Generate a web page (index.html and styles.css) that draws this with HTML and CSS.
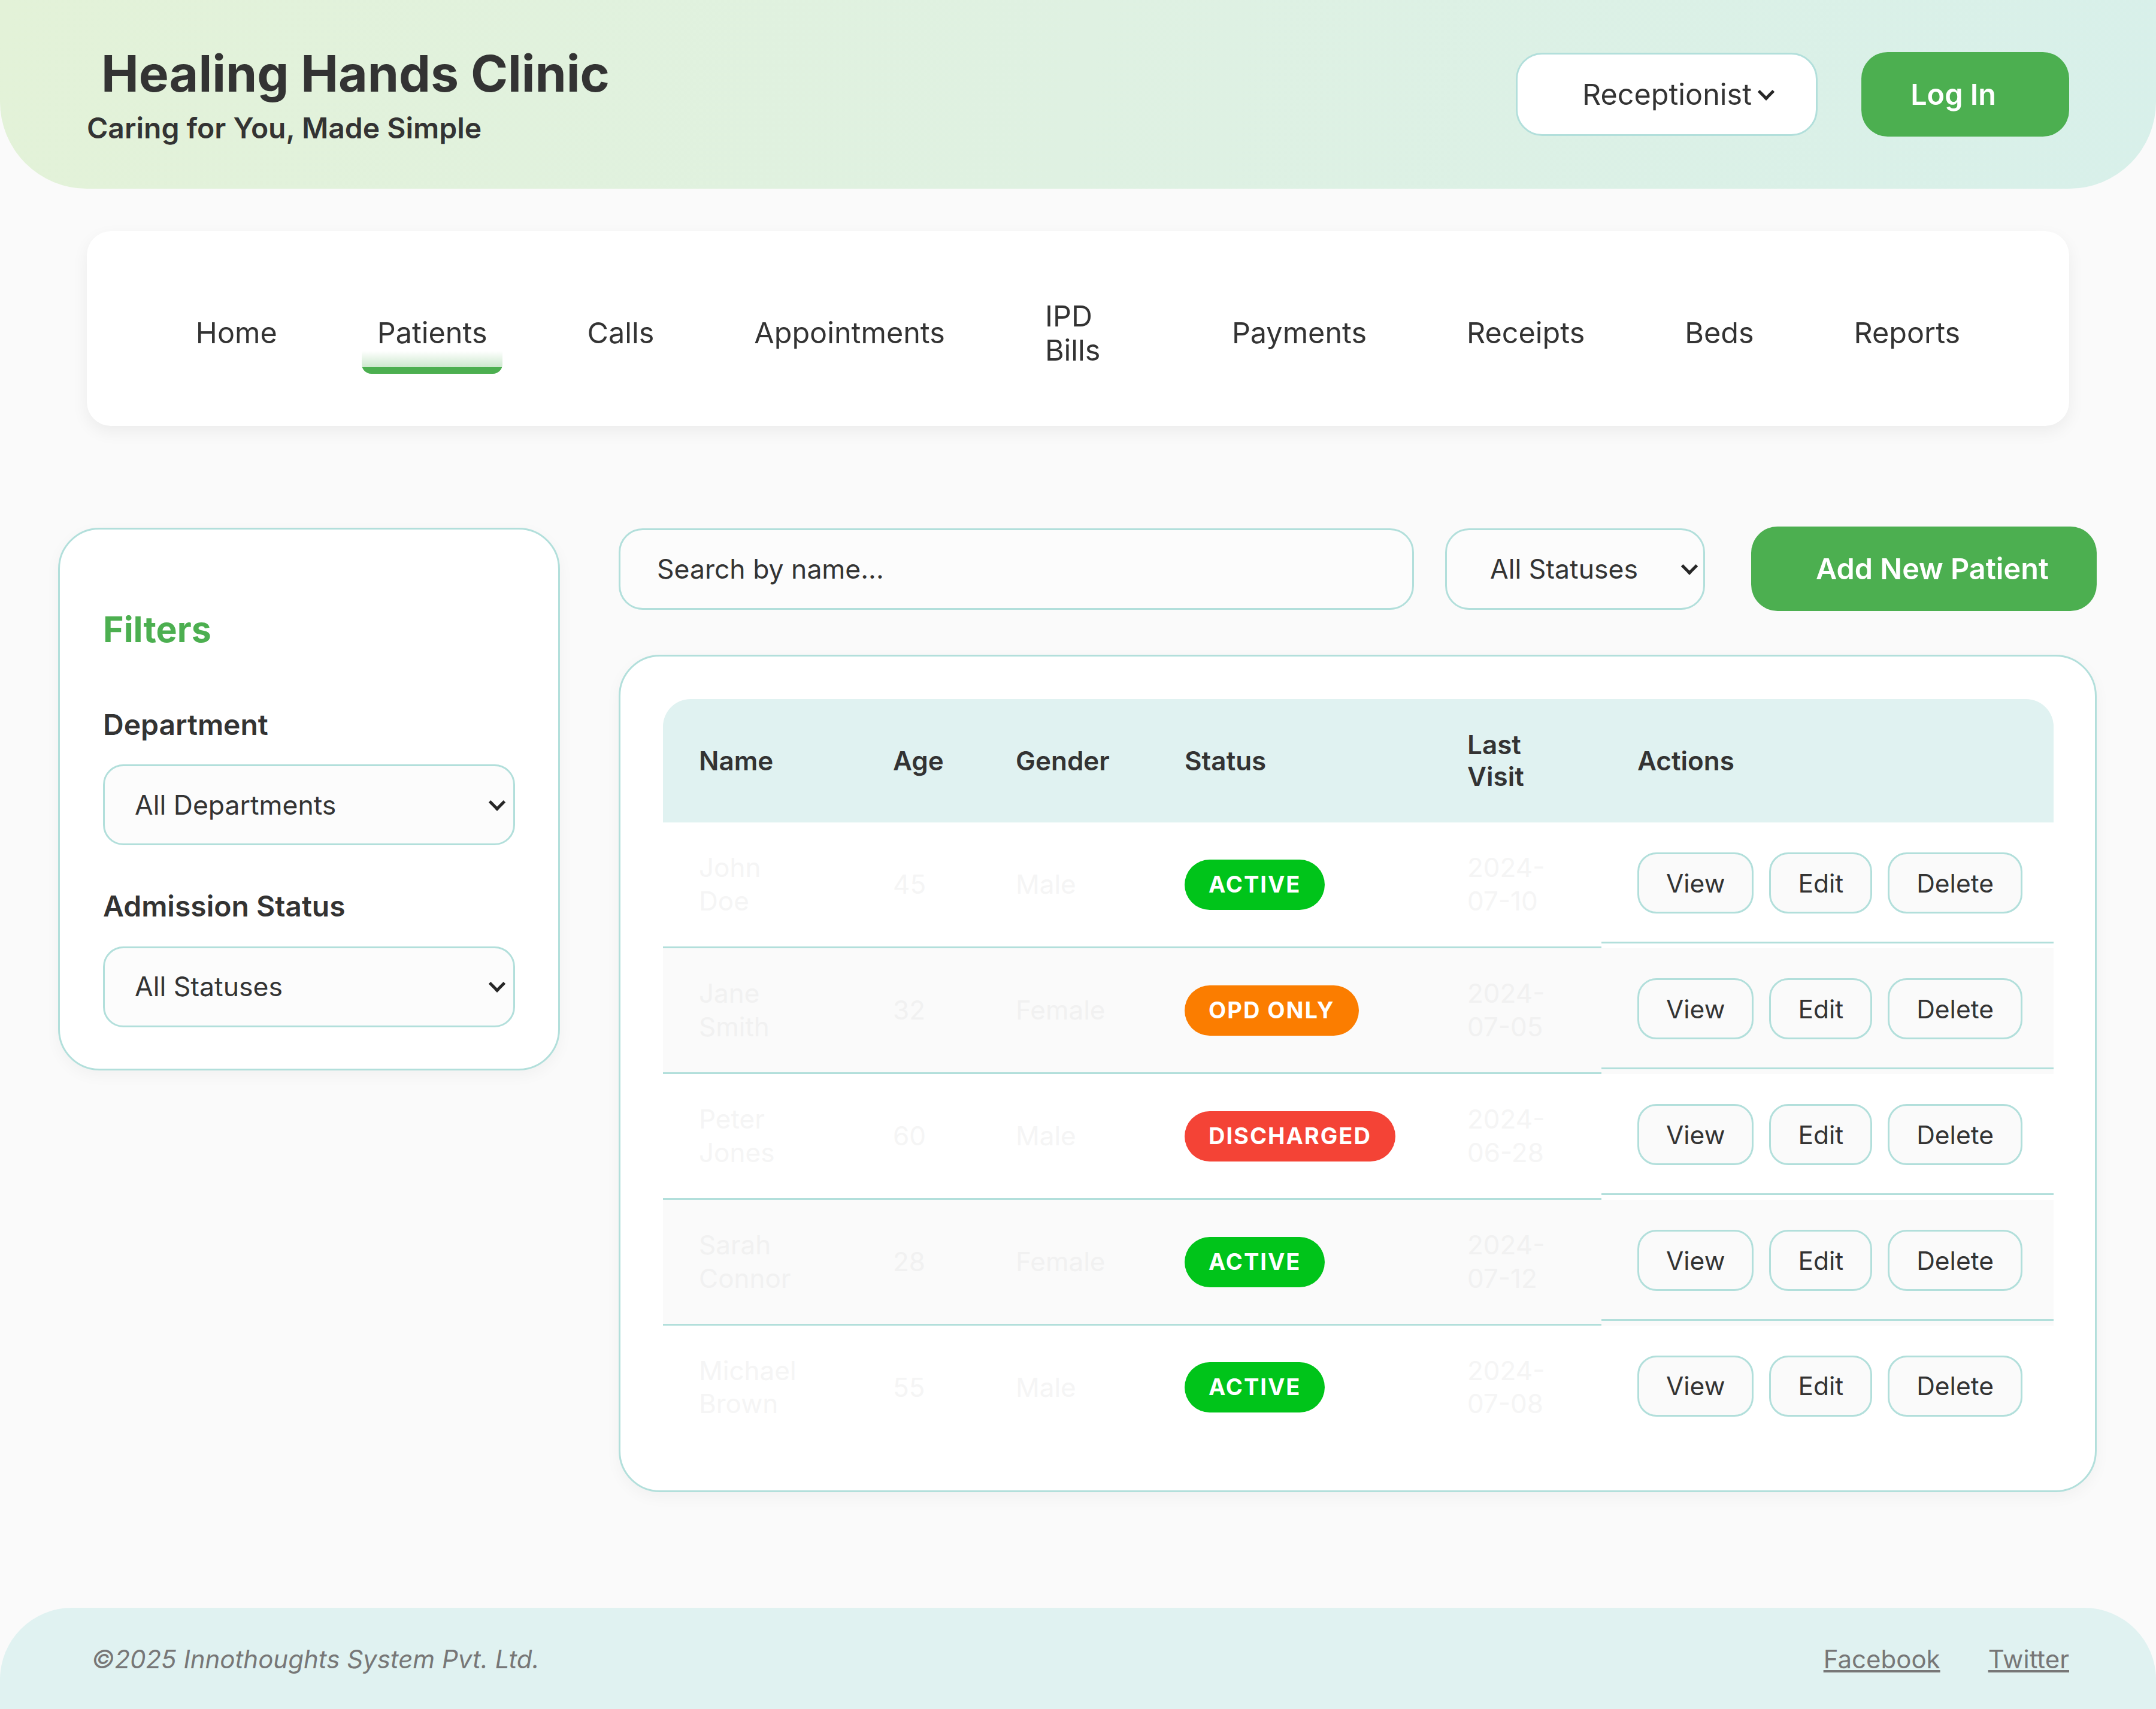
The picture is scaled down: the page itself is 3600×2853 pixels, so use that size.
FILE: index.html
```html
<!DOCTYPE html>
<html lang="en">
<head>
<meta charset="utf-8">
<title>Healing Hands Clinic - Patients</title>
<link rel="stylesheet" href="styles.css">
</head>
<body>
<header class="site-header">
  <div class="brand">
    <h1 class="brand-title">Healing Hands Clinic</h1>
    <p class="brand-tagline">Caring for You, Made Simple</p>
  </div>
  <div class="header-actions">
    <div class="select-wrap role-wrap">
      <select class="role-select">
        <option>Receptionist</option>
        <option>Doctor</option>
        <option>Admin</option>
      </select>
    </div>
    <button class="btn-primary login-btn">Log In</button>
  </div>
</header>

<nav class="main-nav">
  <a class="nav-link" href="#">Home</a>
  <a class="nav-link active" href="#">Patients</a>
  <a class="nav-link" href="#">Calls</a>
  <a class="nav-link" href="#">Appointments</a>
  <a class="nav-link narrow" href="#">IPD Bills</a>
  <a class="nav-link" href="#">Payments</a>
  <a class="nav-link" href="#">Receipts</a>
  <a class="nav-link" href="#">Beds</a>
  <a class="nav-link" href="#">Reports</a>
</nav>

<main class="page">
  <aside class="filters-card">
    <h2 class="filters-title">Filters</h2>
    <div class="filter-group">
      <label class="filter-label">Department</label>
      <div class="select-wrap filter-wrap">
        <select class="filter-select">
          <option>All Departments</option>
        </select>
      </div>
    </div>
    <div class="filter-group">
      <label class="filter-label">Admission Status</label>
      <div class="select-wrap filter-wrap">
        <select class="filter-select">
          <option>All Statuses</option>
        </select>
      </div>
    </div>
  </aside>

  <section class="content">
    <div class="toolbar">
      <input class="search-input" type="text" placeholder="Search by name...">
      <div class="select-wrap status-wrap">
        <select class="status-select">
          <option>All Statuses</option>
        </select>
      </div>
      <button class="btn-primary add-btn">Add New Patient</button>
    </div>

    <div class="table-card">
      <table class="patients-table">
        <colgroup>
          <col class="c-name"><col class="c-age"><col class="c-gender"><col class="c-status"><col class="c-visit"><col class="c-actions">
        </colgroup>
        <thead>
          <tr>
            <th>Name</th><th>Age</th><th>Gender</th><th>Status</th><th>Last Visit</th><th>Actions</th>
          </tr>
        </thead>
        <tbody>
          <tr>
            <td>John Doe</td><td>45</td><td>Male</td>
            <td><span class="badge badge-active">ACTIVE</span></td>
            <td>2024-07-10</td>
            <td class="actions"><button class="btn-outline">View</button><button class="btn-outline">Edit</button><button class="btn-outline">Delete</button></td>
          </tr>
          <tr>
            <td>Jane Smith</td><td>32</td><td>Female</td>
            <td><span class="badge badge-opd">OPD ONLY</span></td>
            <td>2024-07-05</td>
            <td class="actions"><button class="btn-outline">View</button><button class="btn-outline">Edit</button><button class="btn-outline">Delete</button></td>
          </tr>
          <tr>
            <td>Peter Jones</td><td>60</td><td>Male</td>
            <td><span class="badge badge-discharged">DISCHARGED</span></td>
            <td>2024-06-28</td>
            <td class="actions"><button class="btn-outline">View</button><button class="btn-outline">Edit</button><button class="btn-outline">Delete</button></td>
          </tr>
          <tr>
            <td>Sarah Connor</td><td>28</td><td>Female</td>
            <td><span class="badge badge-active">ACTIVE</span></td>
            <td>2024-07-12</td>
            <td class="actions"><button class="btn-outline">View</button><button class="btn-outline">Edit</button><button class="btn-outline">Delete</button></td>
          </tr>
          <tr>
            <td>Michael Brown</td><td>55</td><td>Male</td>
            <td><span class="badge badge-active">ACTIVE</span></td>
            <td>2024-07-08</td>
            <td class="actions"><button class="btn-outline">View</button><button class="btn-outline">Edit</button><button class="btn-outline">Delete</button></td>
          </tr>
        </tbody>
      </table>
    </div>
  </section>
</main>

<footer class="site-footer">
  <p class="copyright">©2025 Innothoughts System Pvt. Ltd.</p>
  <div class="footer-links">
    <a href="#">Facebook</a>
    <a href="#">Twitter</a>
  </div>
</footer>
</body>
</html>
```

FILE: styles.css
```css
* { box-sizing: border-box; }

body {
  margin: 0;
  background: #fafafa;
  font-family: Inter, "Noto Sans", sans-serif;
  font-size: 48px;
  color: #333;
}

/* ---------- header ---------- */
.site-header {
  height: 315px;
  padding: 0 145px;
  display: flex;
  justify-content: space-between;
  align-items: center;
  background: linear-gradient(100deg, #e3f2d8 0%, #dff1e2 50%, #d8f0ea 100%);
  border-radius: 0 0 145px 145px;
}
.brand-title {
  margin: 0 0 11px 24px;
  font-size: 84px;
  font-weight: 700;
  line-height: 1.21;
}
.brand-tagline {
  margin: 0;
  font-size: 48px;
  font-weight: 600;
  line-height: 1.21;
}
.header-actions {
  display: flex;
  align-items: center;
  gap: 73px;
}

.select-wrap { position: relative; }
.select-wrap::after {
  content: "";
  position: absolute;
  right: 30px;
  top: 50%;
  width: 15px;
  height: 15px;
  border-right: 5px solid #262626;
  border-bottom: 5px solid #262626;
  transform: translateY(-72%) rotate(45deg);
  pointer-events: none;
}
select, input, button { font-family: inherit; color: #333; }
select { appearance: none; -webkit-appearance: none; outline: none; }

.role-select {
  width: 504px;
  height: 139px;
  padding: 0 0 0 108px;
  font-size: 48.5px;
  background: #fff;
  border: 3px solid #b2dfdb;
  border-radius: 44px;
}
.role-wrap::after { right: 76px; }

.btn-primary {
  border: none;
  background: #4caf50;
  color: #fff;
  font-size: 48.5px;
  font-weight: 600;
  border-radius: 44px;
}
.login-btn { width: 347px; height: 141px; padding: 0 40px 0 0; }

/* ---------- nav ---------- */
.main-nav {
  margin: 71px 145px 0;
  height: 325px;
  padding-top: 15px;
  background: #fff;
  border-radius: 40px;
  box-shadow: 0 10px 28px rgba(0, 0, 0, 0.06);
  display: flex;
  justify-content: center;
  align-items: center;
  gap: 115px;
}
.nav-link {
  position: relative;
  display: block;
  padding: 0 26px;
  color: #333;
  text-decoration: none;
  font-size: 48.5px;
  line-height: 1.18;
}
.nav-link.narrow { width: 197px; }
.nav-link.active::after {
  content: "";
  position: absolute;
  left: 0;
  right: 0;
  top: calc(100% + 1px);
  height: 38px;
  background: linear-gradient(to bottom, rgba(76, 175, 80, 0) 0%, rgba(76, 175, 80, 0.28) 70%, #4caf50 71%, #4caf50 100%);
  border-radius: 0 0 16px 16px;
}

/* ---------- page ---------- */
.page {
  display: flex;
  align-items: flex-start;
  gap: 98px;
  padding: 0 99px 0 97px;
  margin-top: 168px;
}

.filters-card {
  flex: 0 0 838px;
  margin-top: 2px;
  padding: 72px 72px 69px;
  background: #fff;
  border: 3px solid #b2dfdb;
  border-radius: 69px;
  box-shadow: 0 8px 26px rgba(0, 0, 0, 0.04);
}
.filters-title {
  margin: 59px 0 95px;
  color: #4caf50;
  font-size: 59px;
  font-weight: 700;
  line-height: 1.21;
}
.filter-group + .filter-group { margin-top: 73px; }
.filter-label {
  display: block;
  margin-bottom: 37px;
  font-size: 48px;
  font-weight: 600;
  line-height: 1.21;
}
.filter-select {
  width: 100%;
  height: 135px;
  padding: 0 0 0 50px;
  font-size: 44.5px;
  background: #fcfcfc;
  border: 3px solid #b2dfdb;
  border-radius: 34px;
}
.filter-wrap::after { right: 20px; }

.content { flex: 1; min-width: 0; }

.toolbar {
  display: flex;
  align-items: center;
}
.search-input {
  flex: 1;
  min-width: 0;
  height: 136px;
  margin-right: 52px;
  padding: 0 0 0 61px;
  font-size: 44.5px;
  background: #fcfcfc;
  border: 3px solid #b2dfdb;
  border-radius: 40px;
  outline: none;
}
.search-input::placeholder { color: #333; opacity: 1; }
.status-wrap { margin-right: 77px; }
.status-wrap::after { right: 16px; }
.status-select {
  width: 434px;
  height: 136px;
  padding: 0 0 0 72px;
  font-size: 44.5px;
  background: #fcfcfc;
  border: 3px solid #b2dfdb;
  border-radius: 40px;
}
.add-btn { width: 577px; height: 141px; padding: 0 0 0 28px; }

/* ---------- table ---------- */
.table-card {
  margin-top: 73px;
  padding: 71px 69px 68px 71px;
  background: #fff;
  border: 3px solid #b2dfdb;
  border-radius: 69px;
  box-shadow: 0 8px 26px rgba(0, 0, 0, 0.04);
}
.patients-table {
  width: 100%;
  table-layout: fixed;
  border-collapse: separate;
  border-spacing: 0;
  font-size: 44px;
}
.c-name { width: 324px; }
.c-age { width: 205px; }
.c-gender { width: 282px; }
.c-status { width: 472px; }
.c-visit { width: 284px; }

.patients-table th {
  padding: 50px 60px;
  text-align: left;
  font-weight: 600;
  line-height: 1.21;
  background: #e0f2f1;
}
.patients-table th:first-child { border-top-left-radius: 46px; }
.patients-table th:last-child { border-top-right-radius: 46px; }

.patients-table td {
  padding: 48px 80px 48px 60px;
  line-height: 1.26;
  color: #f5f5f5;
  border-bottom: 3px solid #b2dfdb;
  vertical-align: middle;
}
.patients-table tbody tr:nth-child(even) { background: #fafafa; }
.patients-table tbody tr:nth-child(even) td { color: #f1f1f1; }
.patients-table tbody tr:last-child td { border-bottom: none; }

.badge {
  display: inline-block;
  padding: 19px 40px;
  border-radius: 42px;
  color: #fff;
  font-size: 38px;
  font-weight: 700;
  letter-spacing: 2px;
  line-height: 1.21;
  white-space: nowrap;
}
.badge-active { background: #00c41a; }
.badge-opd { background: #fb7d00; }
.badge-discharged { background: #f44336; }

.patients-table td.actions {
  display: flex;
  gap: 26px;
  padding: 50px 60px 47px;
}
.btn-outline {
  padding: 0 45px;
  height: 102px;
  font-size: 42.5px;
  background: #fafafa;
  border: 3px solid #b2dfdb;
  border-radius: 32px;
  white-space: nowrap;
}

/* ---------- footer ---------- */
.site-footer {
  margin-top: 193px;
  height: 171px;
  padding: 0 145px 0 153px;
  display: flex;
  justify-content: space-between;
  align-items: center;
  background: #e0f2f1;
  border-radius: 120px 120px 0 0;
}
.copyright {
  margin: 0;
  font-size: 42px;
  font-style: italic;
  color: #777;
}
.footer-links {
  display: flex;
  gap: 80px;
}
.footer-links a {
  font-size: 42px;
  color: #777;
}
```
